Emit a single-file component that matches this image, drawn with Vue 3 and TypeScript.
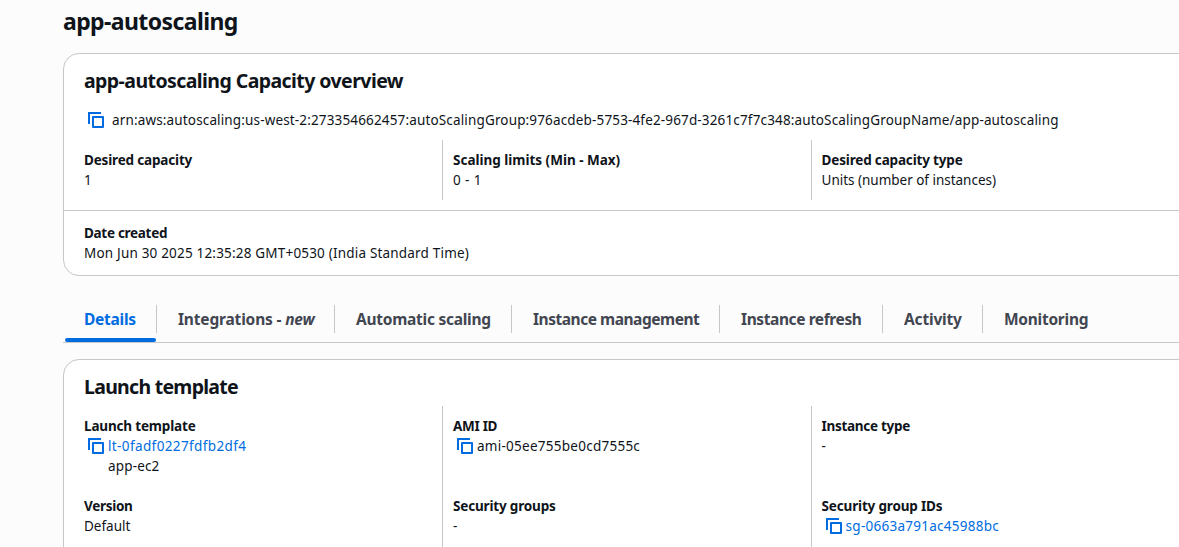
<script setup lang="ts">
import { h, type FunctionalComponent } from 'vue'

interface Tab {
  label: string
  badge?: string
  fit?: 'loose' | 'tight' | 'tighter'
}

const CopyIcon: FunctionalComponent = () =>
  h('svg', { viewBox: '0 0 16 16', width: 16, height: 16, fill: 'none', stroke: '#006ce0', 'stroke-width': 2 }, [
    h('path', { d: 'M1 12V1h12' }),
    h('path', { d: 'M5 5h10v10H5z', 'stroke-linejoin': 'round' }),
  ])

const tabs: Tab[] = [
  { label: 'Details' },
  { label: 'Integrations - ', badge: 'new', fit: 'loose' },
  { label: 'Automatic scaling' },
  { label: 'Instance management', fit: 'tighter' },
  { label: 'Instance refresh', fit: 'tight' },
  { label: 'Activity', fit: 'loose' },
  { label: 'Monitoring' },
]
const arn =
  'arn:aws:autoscaling:us-west-2:273354662457:autoScalingGroup:976acdeb-5753-4fe2-967d-3261c7f7c348:autoScalingGroupName/app-autoscaling'
</script>

<template>
  <main class="page">
    <h1>app-autoscaling</h1>

    <section class="card overview">
      <h2>app-autoscaling Capacity overview</h2>
      <div class="arn"><CopyIcon class="copy" /><span>{{ arn }}</span></div>
      <div class="columns">
        <div class="column">
          <div class="label">Desired capacity</div>
          <div class="value">1</div>
        </div>
        <div class="column">
          <div class="label wide">Scaling limits (Min - Max)</div>
          <div class="value range">0 - 1</div>
        </div>
        <div class="column">
          <div class="label">Desired capacity type</div>
          <div class="value units">Units (number of instances)</div>
        </div>
      </div>
      <footer>
        <div class="label snug">Date created</div>
        <div class="value date">Mon Jun 30 2025 12:35:28 GMT+0530 (India Standard Time)</div>
      </footer>
    </section>

    <nav class="tabs">
      <div v-for="(tab, i) in tabs" :key="tab.label" class="tab" :class="[tab.fit, { active: i === 0 }]">
        <span>{{ tab.label }}<em v-if="tab.badge">{{ tab.badge }}</em></span>
      </div>
    </nav>

    <section class="card template">
      <h2>Launch template</h2>
      <div class="columns">
        <div class="column">
          <div class="label">Launch template</div>
          <div class="value copyable"><CopyIcon class="copy" /><a class="template-id">lt-0fadf0227fdfb2df4</a></div>
          <div class="value indented">app-ec2</div>
          <div class="label snug second">Version</div>
          <div class="value">Default</div>
        </div>
        <div class="column">
          <div class="label snug">AMI ID</div>
          <div class="value copyable"><CopyIcon class="copy" /><span>ami-05ee755be0cd7555c</span></div>
          <div class="value indented"></div>
          <div class="label second">Security groups</div>
          <div class="value">-</div>
        </div>
        <div class="column">
          <div class="label snug">Instance type</div>
          <div class="value">-</div>
          <div class="value indented"></div>
          <div class="label second">Security group IDs</div>
          <div class="value copyable"><CopyIcon class="copy" /><a>sg-0663a791ac45988bc</a></div>
        </div>
      </div>
    </section>
  </main>
</template>

<style>
body {
  margin: 0;
  background: #fcfcfd;
}
</style>

<style scoped>
.page {
  box-sizing: border-box;
  width: 100%;
  height: 547px;
  padding: 6px 0 0 63px;
  overflow: hidden;
  background: #fcfcfd;
  color: #0f141a;
  font-family: "Noto Sans", "Open Sans", sans-serif;
  font-size: 13.5px;
  line-height: 20px;
  white-space: nowrap;
}
h1 {
  margin: 0;
  height: 47px;
  font-size: 23px;
  line-height: 30px;
  font-weight: 700;
  letter-spacing: -0.6px;
}
.card {
  box-sizing: border-box;
  width: 1150px;
  border: 1px solid #c6c6cd;
  border-radius: 16px;
  background: #fff;
}
.overview {
  height: 223px;
}
h2 {
  margin: 0;
  padding: 15px 20px 0;
  font-size: 19.5px;
  line-height: 24px;
  font-weight: 700;
  letter-spacing: -0.57px;
}
.template h2 {
  letter-spacing: -0.72px;
}
.arn {
  display: flex;
  align-items: center;
  height: 20px;
  margin-top: 17px;
  padding-left: 24px;
  gap: 8px;
  letter-spacing: 0.15px;
}
.copy {
  display: block;
  flex: none;
}
.columns {
  display: grid;
  grid-template-columns: 378px 369px 403px;
}
.overview .columns {
  margin-top: 10px;
  height: 60px;
}
.column {
  padding: 10px 10px 0;
  border-left: 1px solid #c6c6cd;
}
.column:first-child {
  padding-left: 20px;
  border-left: none;
}
.column:last-child {
  padding-left: 9.6px;
}
.label {
  height: 20px;
  font-weight: 700;
  letter-spacing: -0.17px;
}
.label.wide {
  letter-spacing: -0.01px;
}
.label.snug {
  letter-spacing: -0.3px;
}
.value {
  height: 20px;
}
.range {
  letter-spacing: 0.4px;
}
.units {
  letter-spacing: -0.02px;
}
.date {
  letter-spacing: 0.19px;
}
footer {
  margin-top: 10px;
  padding: 12px 20px 0;
  border-top: 1px solid #c6c6cd;
}
.tabs {
  box-sizing: border-box;
  display: grid;
  grid-template-columns: 94px 178px 177px 208px 163px 100px 1fr;
  height: 51px;
  margin-top: 16px;
  padding-top: 13px;
  border-bottom: 1px solid #c6c6cd;
}
.tab {
  position: relative;
  box-sizing: border-box;
  height: 28px;
  padding-left: 21px;
  border-right: 1px solid #c6c6cd;
  color: #424650;
  font-size: 15.5px;
  line-height: 28px;
  font-weight: 700;
  letter-spacing: -0.26px;
}
.tab.loose {
  letter-spacing: -0.17px;
}
.tab.tight {
  letter-spacing: -0.4px;
}
.tab.tighter {
  letter-spacing: -0.47px;
}
.tab:last-child {
  border-right: none;
}
.tab.active {
  color: #006ce0;
}
.tab.active::after {
  content: "";
  position: absolute;
  left: 2px;
  right: 0;
  top: 33px;
  height: 4px;
  border-radius: 2px;
  background: #006ce0;
}
.template {
  height: 300px;
  margin-top: 16px;
}
.template .columns {
  height: 240px;
  margin-top: 7px;
}
.copyable {
  display: flex;
  align-items: center;
  gap: 4px;
  padding-left: 4px;
  letter-spacing: 0.26px;
}
.template-id {
  letter-spacing: 0.38px;
}
.indented {
  padding-left: 24px;
  letter-spacing: 0.15px;
}
.second {
  margin-top: 20px;
}
a {
  color: #006ce0;
}
</style>
